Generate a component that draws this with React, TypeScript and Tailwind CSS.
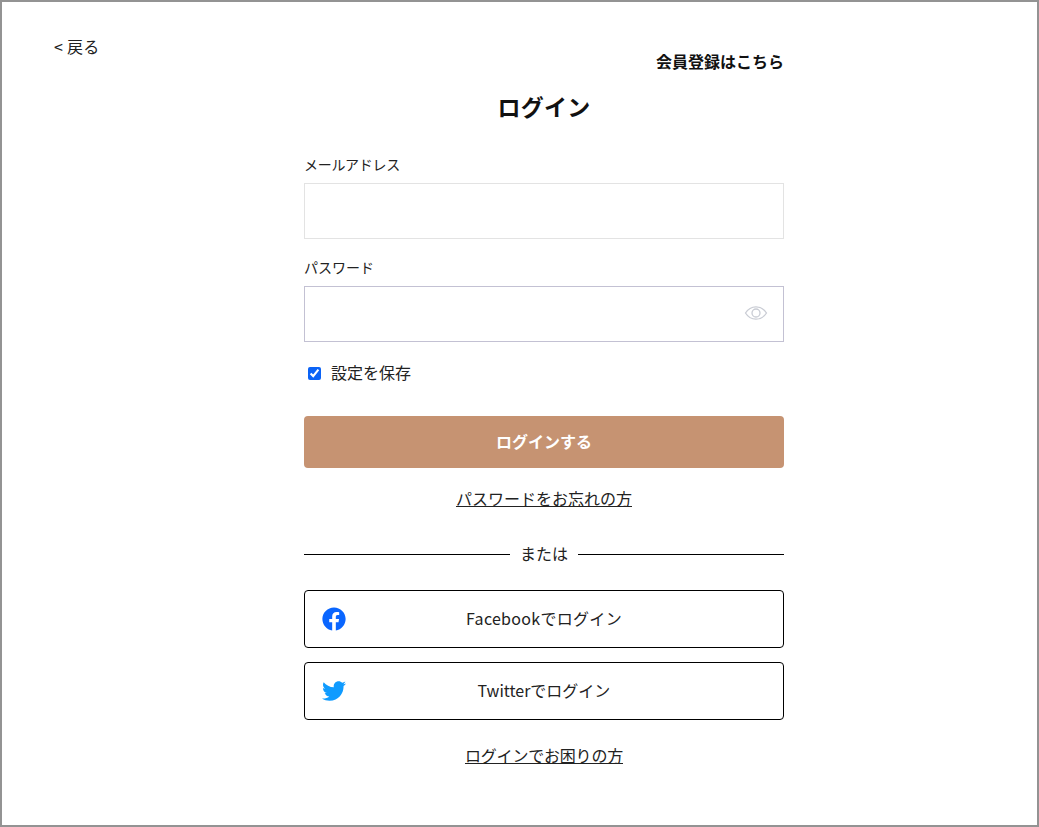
import { FaFacebook, FaTwitter } from "react-icons/fa";

const font = "font-['Noto_Sans_CJK_JP','Noto_Sans',sans-serif]";

export default function App() {
  return (
    <div className={`${font} h-[827px] w-[1039px] border-2 border-[#939393] bg-white text-[#1a1a1a] flex`}>
      <div className="w-[302px] pl-[52px] pt-[33px] shrink-0">
        <a className="block text-[16px] leading-[22px] tracking-[0.3px] text-[#222]">&lt; 戻る</a>
      </div>
      <main className="w-[480px] flex flex-col">
        <a className="mt-[48px] self-end text-[16px] leading-[22px] font-bold text-[#111]">会員登録はこちら</a>
        <h1 className="mt-[18px] text-center text-[23px] leading-[32px] font-bold tracking-[0.2px] text-[#111]">ログイン</h1>
        <label className="mt-[32px] text-[14px] leading-[20px] tracking-[-0.3px] text-[#222]">メールアドレス</label>
        <input className="mt-[9px] h-[56px] border border-[#e3e3e3] outline-none" />
        <label className="mt-[18px] text-[14px] leading-[20px] text-[#222]">パスワード</label>
        <div className="mt-[9px] h-[56px] border border-[#c3c1d3] flex items-center justify-end pr-[15px]">
          <svg width="24" height="18" viewBox="0 0 24 18" fill="none" stroke="#c9ccd4" strokeWidth="1.3" className="-mt-[2px]">
            <path d="M1.5 9C4 5 7.5 2.8 12 2.8S20 5 22.5 9C20 13 16.5 15.2 12 15.2S4 13 1.5 9Z" />
            <circle cx="12" cy="9" r="4" />
          </svg>
        </div>
        <label className="mt-[20px] flex items-center pl-[4px] text-[16px] leading-[22px] text-[#222]">
          <input type="checkbox" defaultChecked className="m-0 h-[13px] w-[13px] accent-[#0b63f6]" />
          <span className="ml-[10px] -translate-y-px">設定を保存</span>
        </label>
        <button className="mt-[32px] h-[52px] rounded-[4px] bg-[#c69372] pb-[2px] text-[16px] font-bold text-white">ログインする</button>
        <a className="mt-[19px] self-center text-[16px] leading-[22px] underline text-[#222]">パスワードをお忘れの方</a>
        <div className="mt-[33px] flex items-center gap-[10px] text-[16px] leading-[22px] text-[#222]">
          <span className="h-px flex-1 bg-black" />
          <span className="pb-[2px]">または</span>
          <span className="h-px flex-1 bg-black" />
        </div>
        <button className="relative mt-[24px] h-[58px] rounded-[4px] border border-black pb-[2px] text-[16px] tracking-[0.3px] text-[#222]">
          <FaFacebook className="absolute left-[17px] top-[16px] text-[24px] text-[#0a66ff]" />
          Facebookでログイン
        </button>
        <button className="relative mt-[14px] h-[58px] rounded-[4px] border border-black pb-[2px] text-[16px] text-[#222]">
          <FaTwitter className="absolute left-[17px] top-[16px] text-[24px] text-[#0f9bff]" />
          Twitterでログイン
        </button>
        <a className="mt-[24px] self-center text-[16px] leading-[22px] tracking-[-0.2px] underline text-[#222]">ログインでお困りの方</a>
      </main>
    </div>
  );
}
